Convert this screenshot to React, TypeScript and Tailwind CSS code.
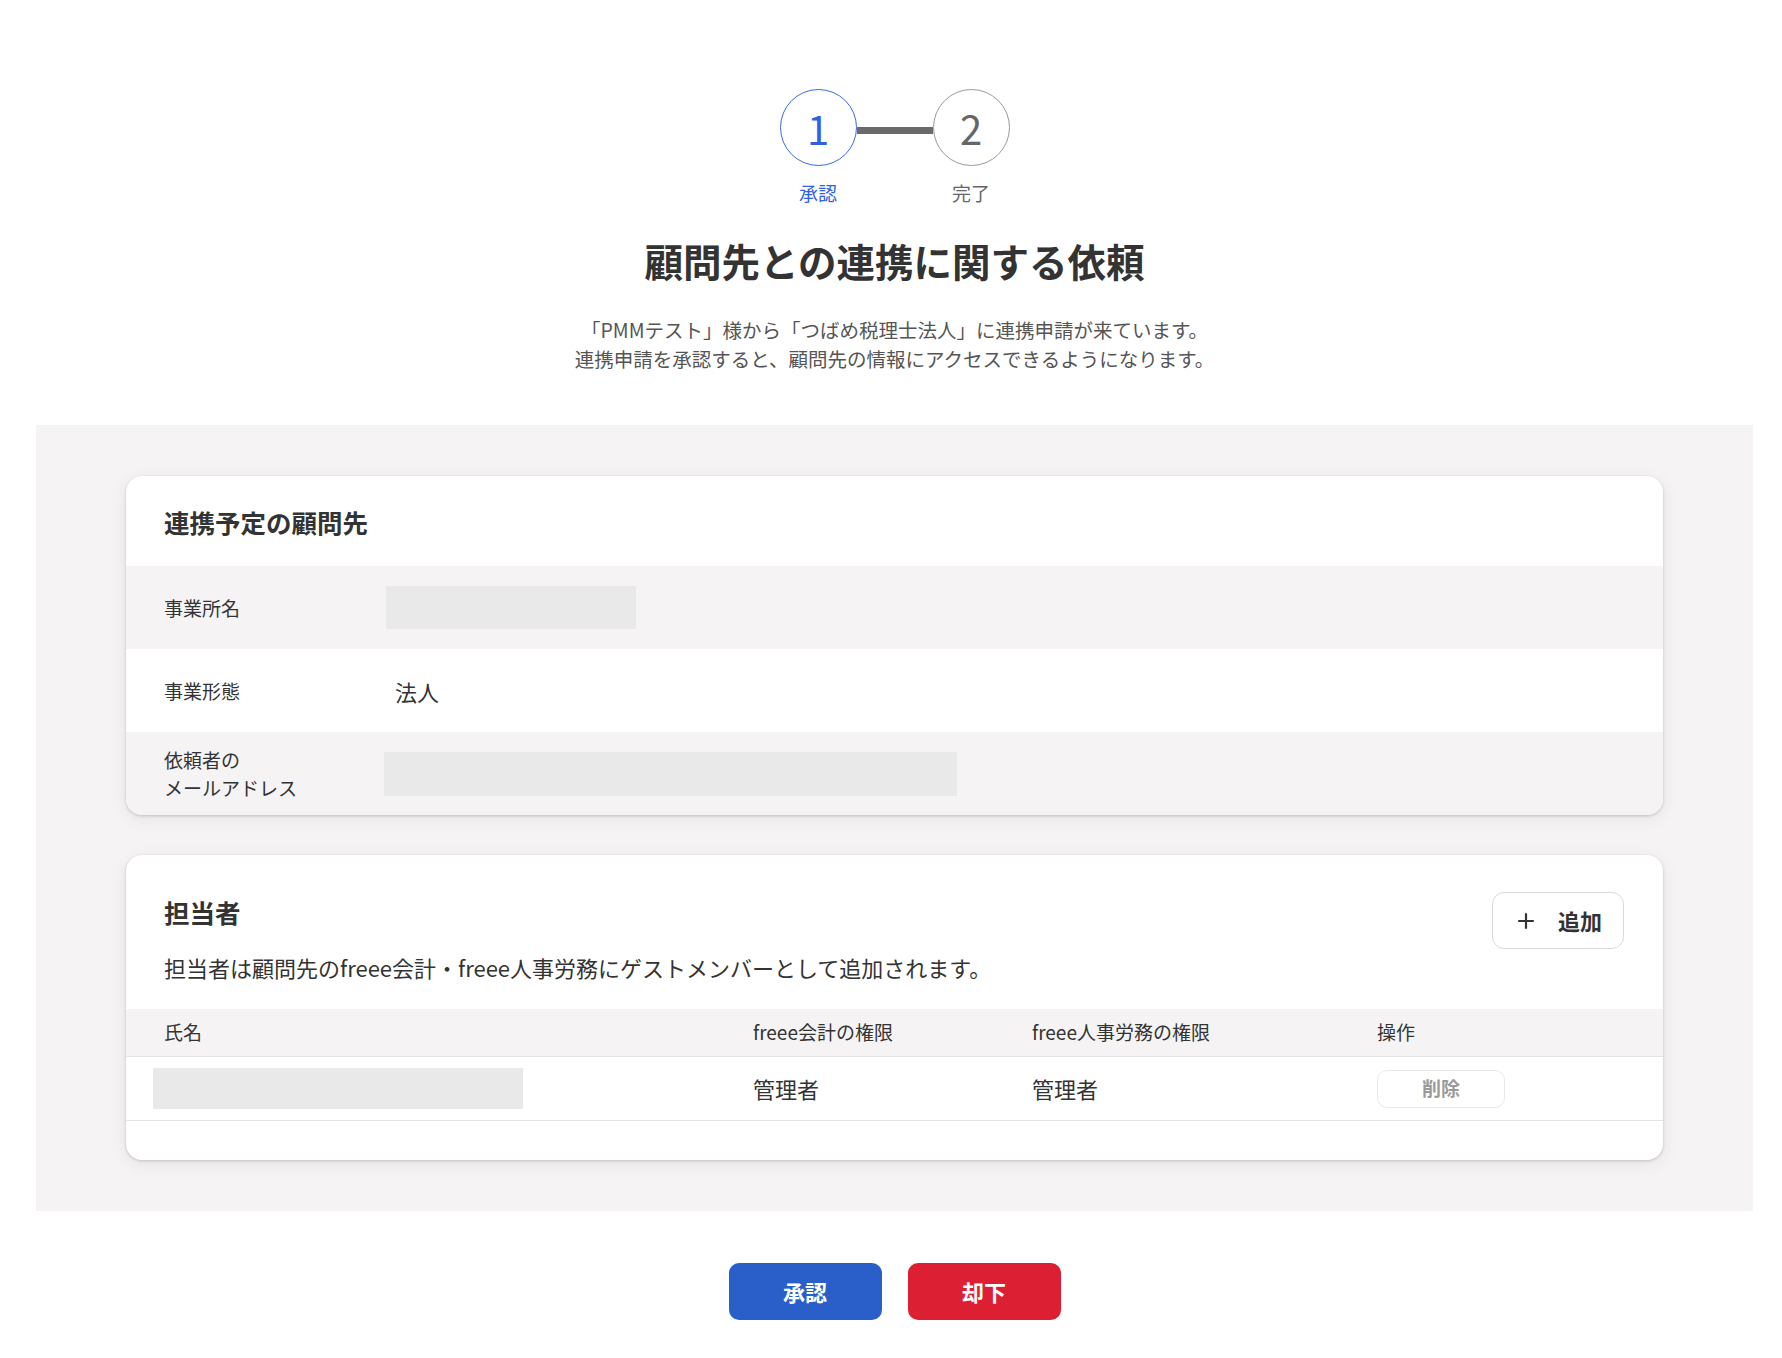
import { Plus } from 'lucide-react'

const rows = [
    { label: ['事業所名'], value: 'blank-short', bg: 'bg-[#f5f3f4]' },
    { label: ['事業形態'], value: '法人', bg: 'bg-white' },
    { label: ['依頼者の', 'メールアドレス'], value: 'blank-long', bg: 'bg-[#f5f3f4]' },
]

function Stepper() {
    return (
        <div className="flex justify-center items-start pt-[89px]">
            <div className="flex flex-col items-center w-[77px]">
                <div className="w-[77px] h-[77px] rounded-full border border-[#3a6ae6] flex items-center justify-center text-[40px] leading-none text-[#2f62e0]">
                    1
                </div>
                <span className="mt-[15px] text-[19px] leading-[24px] text-[#2f62e0]">承認</span>
            </div>
            <div className="w-[76px] h-[7px] mt-[38px] bg-[#6b6969]" />
            <div className="flex flex-col items-center w-[77px]">
                <div className="w-[77px] h-[77px] rounded-full border border-[#9a9a9a] flex items-center justify-center text-[40px] leading-none text-[#666]">
                    2
                </div>
                <span className="mt-[15px] text-[19px] leading-[24px] text-[#666]">完了</span>
            </div>
        </div>
    )
}

function ClientCard() {
    return (
        <section className="bg-white rounded-[16px] overflow-hidden shadow-[0_1px_3px_rgba(0,0,0,0.18),0_4px_18px_rgba(0,0,0,0.07)]">
            <header className="h-[90px] flex items-center pl-[38px] pt-[2px]">
                <h2 className="text-[25.5px] leading-[32px] font-bold text-[#333]">連携予定の顧問先</h2>
            </header>
            {rows.map((row, i) => (
                <div key={i} className={`h-[83px] flex items-center pl-[38px] ${row.bg}`}>
                    <div className="w-[222px] text-[19px] leading-[28px] text-[#333]">
                        {row.label.map((l) => (
                            <div key={l}>{l}</div>
                        ))}
                    </div>
                    {row.value === 'blank-short' && <div className="w-[250px] h-[43px] bg-[#e9e9e9]" />}
                    {row.value === 'blank-long' && <div className="w-[573px] h-[44px] -ml-[2px] bg-[#e9e9e9]" />}
                    {row.value === '法人' && <span className="pl-[9px] text-[22px] leading-[30px] text-[#333]">法人</span>}
                </div>
            ))}
        </section>
    )
}

function StaffCard() {
    return (
        <section className="mt-[40px] bg-white rounded-[16px] overflow-hidden pb-[39px] shadow-[0_1px_3px_rgba(0,0,0,0.18),0_4px_18px_rgba(0,0,0,0.07)]">
            <header className="flex justify-between items-start pl-[38px] pr-[39px] pt-[37px]">
                <div className="pt-[4px]">
                    <h2 className="text-[25.5px] leading-[32px] font-bold text-[#333]">担当者</h2>
                    <p className="mt-[24px] text-[22px] leading-[30px] text-[#333]">
                        担当者は顧問先のfreee会計・freee人事労務にゲストメンバーとして追加されます。
                    </p>
                </div>
                <button className="w-[132px] h-[57px] rounded-[12px] border border-[#d9d9d9] bg-white flex items-center justify-center gap-[20px] text-[22px] font-bold text-[#333]">
                    <Plus size={24} strokeWidth={2.2} className="text-[#333]" />
                    <span>追加</span>
                </button>
            </header>
            <div className="mt-[27px]">
                <div className="grid grid-cols-[589px_279px_345px_1fr] h-[48px] items-center pl-[38px] bg-[#f5f3f4] border-b border-[#e4e4e4] text-[19px] text-[#333]">
                    <span>氏名</span>
                    <span>freee会計の権限</span>
                    <span>freee人事労務の権限</span>
                    <span>操作</span>
                </div>
                <div className="grid grid-cols-[589px_279px_345px_1fr] h-[64px] items-center pl-[38px] border-b border-[#e4e4e4] text-[22px] text-[#333]">
                    <div className="-ml-[11px] w-[370px] h-[41px] bg-[#e9e9e9]" />
                    <span>管理者</span>
                    <span>管理者</span>
                    <div>
                        <button className="w-[128px] h-[38px] rounded-[10px] border border-[#e8e8e8] bg-white text-[19px] font-bold text-[#9a9a9a]">
                            削除
                        </button>
                    </div>
                </div>
            </div>
        </section>
    )
}

export default function App() {
    return (
        <div className="min-h-screen bg-white pl-[36px] pr-[29px] pb-[39px] font-['Noto_Sans_CJK_JP','Noto_Sans',sans-serif] text-[#333]">
            <Stepper />
            <h1 className="mt-[31px] text-center text-[38.5px] leading-[49px] font-bold text-[#333]">
                顧問先との連携に関する依頼
            </h1>
            <div className="mt-[30px] text-center text-[19.5px] leading-[29px] text-[#555]">
                <p>「PMMテスト」様から「つばめ税理士法人」に連携申請が来ています。</p>
                <p>連携申請を承認すると、顧問先の情報にアクセスできるようになります。</p>
            </div>
            <main className="mt-[52px] bg-[#f5f3f4] px-[90px] pt-[51px] pb-[51px]">
                <ClientCard />
                <StaffCard />
            </main>
            <div className="mt-[52px] flex justify-center gap-[26px]">
                <button className="w-[153px] h-[57px] rounded-[10px] bg-[#2a5fc9] text-white text-[22px] font-bold">承認</button>
                <button className="w-[153px] h-[57px] rounded-[10px] bg-[#dc1f33] text-white text-[22px] font-bold">却下</button>
            </div>
        </div>
    )
}
